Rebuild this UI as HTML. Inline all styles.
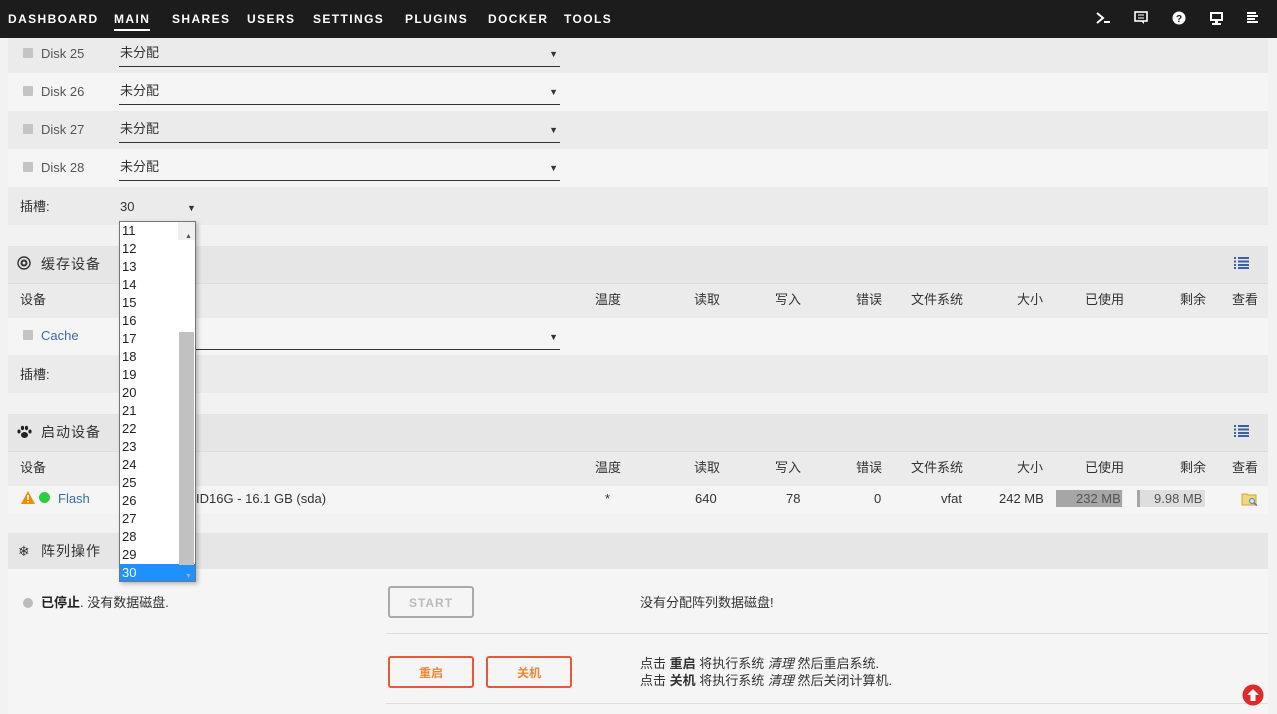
<!DOCTYPE html>
<html><head><meta charset="utf-8"><style>
*{margin:0;padding:0;box-sizing:border-box}
body{width:1277px;height:714px;overflow:hidden;background:#f2f2f2;font-family:"Liberation Sans","Noto Sans CJK SC",sans-serif;font-size:13px;line-height:16px;color:#333;position:relative}
.a{position:absolute}
.nav{left:0;top:0;width:1277px;height:38px;background:#1c1c1c}
.nav span{position:absolute;top:11px;color:#fff;font-weight:bold;font-size:12px;letter-spacing:1.4px}
.row{position:absolute;left:8px;width:1260px}
.d{background:#ebebeb}.l{background:#f5f5f5}.h{background:#e6e6e6}
.sq{position:absolute;width:10px;height:10px;background:#c4c4c4;border-radius:1px}
.sel{position:absolute;left:119px;width:441px;border-bottom:1px solid #333;height:23px}
.sel .ar{position:absolute;right:2px;top:2px;font-size:9px}
.t{position:absolute;white-space:nowrap}
.lst{left:119px;top:221px;width:77px;height:361px;background:#fff;border:1px solid #767676;box-shadow:2px 2px 4px rgba(0,0,0,.25);overflow:hidden}
.lst div{height:18px;line-height:18px;padding-left:2px;font-size:13px;color:#222}
.sb{position:absolute;right:0;top:0;width:17px;height:359px;background:#f0f0f0}
.btn{position:absolute;height:32px;border-radius:3px;text-align:center;line-height:30px;font-weight:bold;font-size:12px}
</style></head><body>
<div class="a nav">
<span style="left:8px">DASHBOARD</span><span style="left:114px">MAIN</span><span style="left:172px">SHARES</span><span style="left:247px">USERS</span><span style="left:313px">SETTINGS</span><span style="left:405px">PLUGINS</span><span style="left:488px">DOCKER</span><span style="left:564px">TOOLS</span>
<div class="a" style="left:114px;top:29px;width:36px;height:2px;background:#fff"></div>
<svg class="a" style="left:1095px;top:11px" width="16" height="14"><path d="M2 2l6 5-6 5" stroke="#fff" stroke-width="2" fill="none"/><rect x="9" y="10" width="6" height="2" fill="#fff"/></svg>
<svg class="a" style="left:1134px;top:11px" width="14" height="14"><rect x="1" y="1" width="12" height="9" fill="none" stroke="#fff" stroke-width="1.6"/><path d="M4 4h6M4 7h6" stroke="#fff"/><path d="M7 10l3 3v-3z" fill="#fff"/></svg>
<svg class="a" style="left:1172px;top:11px" width="14" height="14"><circle cx="7" cy="7" r="6.5" fill="#fff"/><text x="7" y="11" font-size="10" font-weight="bold" text-anchor="middle" fill="#1c1c1c" font-family="Liberation Sans">?</text></svg>
<svg class="a" style="left:1209px;top:11px" width="15" height="15"><rect x="1" y="1" width="13" height="9" fill="#fff"/><rect x="3" y="3" width="9" height="5" fill="#1c1c1c"/><rect x="6" y="10" width="3" height="2" fill="#fff"/><rect x="3" y="12" width="9" height="2" fill="#fff"/></svg>
<svg class="a" style="left:1247px;top:12px" width="12" height="13"><path d="M0 1h9M0 4h11M0 7h8M0 10h11" stroke="#fff" stroke-width="2"/></svg>
</div>

<div class="row d" style="top:38px;height:35px"></div>
<div class="row l" style="top:73px;height:38px"></div>
<div class="row d" style="top:111px;height:38px"></div>
<div class="row l" style="top:149px;height:38px"></div>
<div class="row d" style="top:187px;height:38px"></div>

<div class="sq" style="left:23px;top:48px"></div><div class="t" style="left:41px;top:46px;color:#555">Disk 25</div><div class="sel" style="top:44px"><span class="t" style="left:1px;top:1px">未分配</span><span class="ar">▼</span></div>
<div class="sq" style="left:23px;top:86px"></div><div class="t" style="left:41px;top:84px;color:#555">Disk 26</div><div class="sel" style="top:82px"><span class="t" style="left:1px;top:1px">未分配</span><span class="ar">▼</span></div>
<div class="sq" style="left:23px;top:124px"></div><div class="t" style="left:41px;top:122px;color:#555">Disk 27</div><div class="sel" style="top:120px"><span class="t" style="left:1px;top:1px">未分配</span><span class="ar">▼</span></div>
<div class="sq" style="left:23px;top:162px"></div><div class="t" style="left:41px;top:160px;color:#555">Disk 28</div><div class="sel" style="top:158px"><span class="t" style="left:1px;top:1px">未分配</span><span class="ar">▼</span></div>
<div class="t" style="left:20px;top:199px">插槽:</div><div class="t" style="left:120px;top:199px">30</div><div class="t" style="left:187px;top:200px;font-size:9px">▼</div>

<div class="row h" style="top:246px;height:37px"></div>
<div class="row d" style="top:283px;height:35px;border-top:1px solid #ddd"></div>
<div class="row l" style="top:318px;height:37px"></div>
<div class="row d" style="top:355px;height:38px"></div>
<svg class="a" style="left:17px;top:256px" width="14" height="14"><circle cx="7" cy="7" r="6" fill="none" stroke="#333" stroke-width="1.4"/><circle cx="7" cy="7" r="3.5" fill="#333"/><circle cx="7" cy="7" r="1.5" fill="#e6e6e6"/></svg>
<div class="t" style="left:41px;top:256px;font-size:14px;letter-spacing:1px">缓存设备</div>
<svg class="a" style="left:1234px;top:257px" width="15" height="12"><path d="M0 1h2M4 1h11M0 4.5h2M4 4.5h11M0 8h2M4 8h11M0 11h2M4 11h11" stroke="#3b5ea8" stroke-width="2"/></svg>
<div class="t" style="left:20px;top:292px">设备</div>
<div class="sq" style="left:23px;top:330px"></div><div class="t" style="left:41px;top:328px;color:#3b6bb0">Cache</div>
<div class="sel" style="top:327px"><span class="ar">▼</span></div>
<div class="t" style="left:20px;top:367px">插槽:</div>

<div class="row h" style="top:414px;height:37px"></div>
<div class="row d" style="top:451px;height:35px;border-top:1px solid #ddd"></div>
<div class="row l" style="top:486px;height:28px"></div>
<svg class="a" style="left:17px;top:425px" width="15" height="14"><ellipse cx="7.5" cy="10" rx="3.5" ry="3" fill="#222"/><ellipse cx="2" cy="6.5" rx="1.6" ry="2" fill="#222"/><ellipse cx="5.5" cy="3" rx="1.6" ry="2.2" fill="#222"/><ellipse cx="9.5" cy="3" rx="1.6" ry="2.2" fill="#222"/><ellipse cx="13" cy="6.5" rx="1.6" ry="2" fill="#222"/></svg>
<div class="t" style="left:41px;top:424px;font-size:14px;letter-spacing:1px">启动设备</div>
<svg class="a" style="left:1234px;top:425px" width="15" height="12"><path d="M0 1h2M4 1h11M0 4.5h2M4 4.5h11M0 8h2M4 8h11M0 11h2M4 11h11" stroke="#3b5ea8" stroke-width="2"/></svg>
<div class="t" style="left:20px;top:460px">设备</div>
<svg class="a" style="left:21px;top:491px" width="14" height="13"><path d="M7 0L14 13H0z" fill="#f08c00"/><rect x="6.2" y="4" width="1.6" height="5" fill="#fff"/><rect x="6.2" y="10" width="1.6" height="1.6" fill="#fff"/></svg>
<div class="a" style="left:39px;top:492px;width:11px;height:11px;border-radius:50%;background:#2ecc40"></div>
<div class="t" style="left:58px;top:491px;color:#3b6bb0">Flash</div>
<div class="t" style="left:196px;top:491px">ID16G - 16.1 GB (sda)</div>

<div class="t" style="left:595px;top:292px">温度</div><div class="t" style="left:694px;top:292px">读取</div><div class="t" style="left:775px;top:292px">写入</div><div class="t" style="left:856px;top:292px">错误</div><div class="t" style="left:911px;top:292px">文件系统</div><div class="t" style="left:1017px;top:292px">大小</div><div class="t" style="left:1085px;top:292px">已使用</div><div class="t" style="left:1180px;top:292px">剩余</div><div class="t" style="left:1232px;top:292px">查看</div>
<div class="t" style="left:595px;top:460px">温度</div><div class="t" style="left:694px;top:460px">读取</div><div class="t" style="left:775px;top:460px">写入</div><div class="t" style="left:856px;top:460px">错误</div><div class="t" style="left:911px;top:460px">文件系统</div><div class="t" style="left:1017px;top:460px">大小</div><div class="t" style="left:1085px;top:460px">已使用</div><div class="t" style="left:1180px;top:460px">剩余</div><div class="t" style="left:1232px;top:460px">查看</div>
<div class="t" style="left:605px;top:491px">*</div><div class="t" style="left:695px;top:491px">640</div><div class="t" style="left:786px;top:491px">78</div><div class="t" style="left:874px;top:491px">0</div><div class="t" style="left:941px;top:491px">vfat</div><div class="t" style="left:999px;top:491px">242 MB</div>
<div class="a" style="left:1056px;top:490px;width:67px;height:17px;background:#ebebeb"><div style="width:66px;height:17px;background:#a6a6a6"></div></div><div class="t" style="left:1076px;top:491px;color:#555">232 MB</div>
<div class="a" style="left:1137px;top:490px;width:68px;height:17px;background:#dedede;border-left:3px solid #a6a6a6"></div><div class="t" style="left:1154px;top:491px;color:#555">9.98 MB</div>
<svg class="a" style="left:1241px;top:492px" width="17" height="14"><path d="M1 2h5l1 1h8v10H1z" fill="#f1d77a" stroke="#c9a83a"/><circle cx="11" cy="9" r="2.5" fill="#cfe3f5" stroke="#5a7fa8"/><path d="M13 11l3 2.5" stroke="#5a7fa8" stroke-width="1.5"/></svg>

<div class="row h" style="top:533px;height:36px"></div>
<div class="row l" style="top:569px;height:145px"></div>
<div class="t" style="left:18px;top:543px;font-size:14px">❄</div><div class="t" style="left:41px;top:543px;font-size:14px;letter-spacing:1px">阵列操作</div>
<div class="a" style="left:23px;top:598px;width:10px;height:10px;border-radius:50%;background:#bbb"></div>
<div class="t" style="left:41px;top:595px"><b style="color:#222">已停止</b>. 没有数据磁盘.</div>
<div class="btn" style="left:388px;top:586px;width:86px;border:2px solid #aaa;color:#bbb;letter-spacing:1px">START</div>
<div class="t" style="left:640px;top:595px">没有分配阵列数据磁盘!</div>
<div class="a" style="left:386px;top:633px;width:882px;height:1px;background:#ddd"></div>
<div class="btn" style="left:388px;top:656px;width:86px;border:2px solid #e8573a;color:#f0883a">重启</div>
<div class="btn" style="left:486px;top:656px;width:86px;border:2px solid #e8573a;color:#f0883a">关机</div>
<div class="t" style="left:640px;top:655px;line-height:17px">点击 <b>重启</b> 将执行系统 <i>清理</i> 然后重启系统.<br>点击 <b>关机</b> 将执行系统 <i>清理</i> 然后关闭计算机.</div>
<div class="a" style="left:386px;top:703px;width:882px;height:1px;background:#ddd"></div>
<svg class="a" style="left:1242px;top:684px" width="22" height="22"><circle cx="11" cy="11" r="10.5" fill="#e22828"/><path d="M11 5l6 6h-3.5v6h-5v-6H5z" fill="#fff"/></svg>

<div class="a lst">
<div>11</div><div>12</div><div>13</div><div>14</div><div>15</div><div>16</div><div>17</div><div>18</div><div>19</div><div>20</div><div>21</div><div>22</div><div>23</div><div>24</div><div>25</div><div>26</div><div>27</div><div>28</div><div>29</div><div style="background:#1e90ff;color:#fff">30</div>
<div class="sb"><div class="a" style="left:5px;top:6px;font-size:7px;color:#555">▲</div><div class="a" style="left:1px;top:110px;width:15px;height:233px;background:#c1c1c1"></div><div class="a" style="left:5px;top:346px;font-size:7px;color:#aaa">▼</div></div>
</div>
</body></html>
